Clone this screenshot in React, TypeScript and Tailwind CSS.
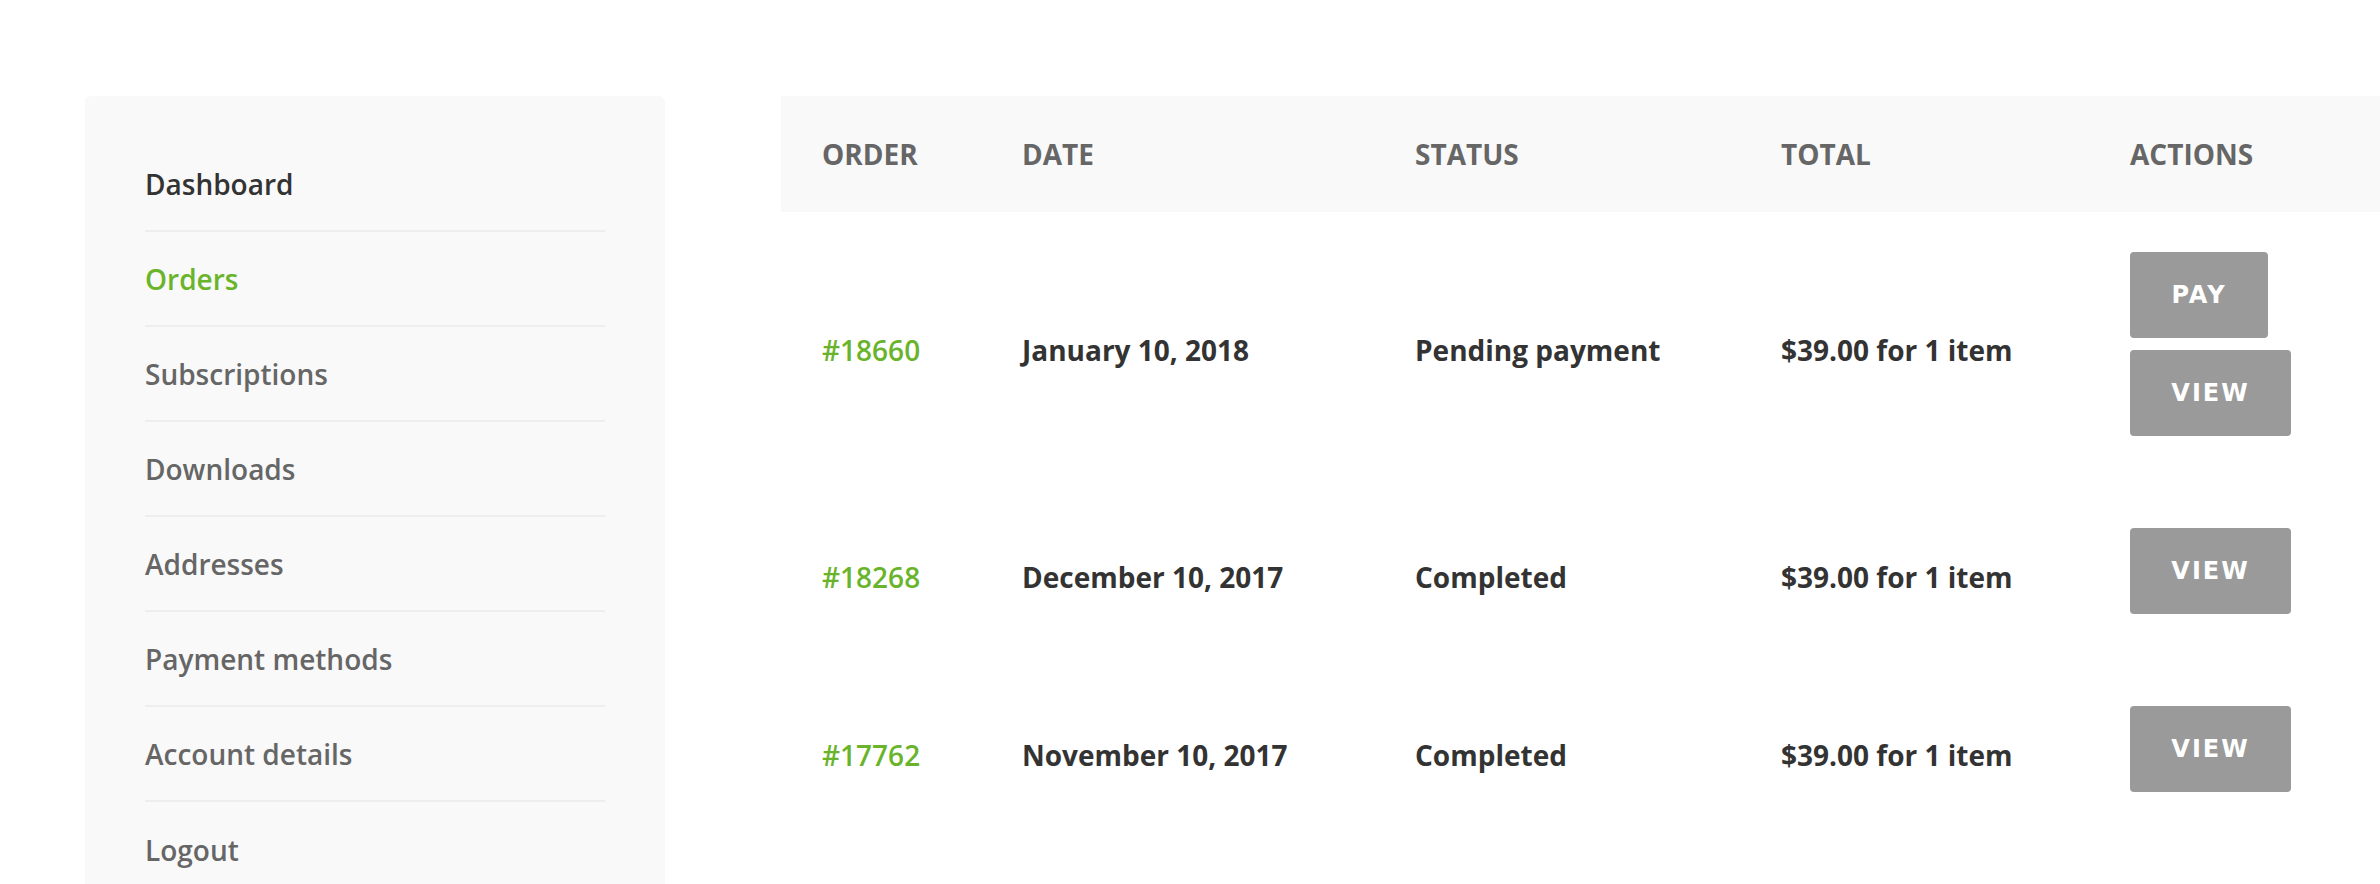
import React from "react";

const navItems = [
  { label: "Dashboard", tone: "text-[#333333]" },
  { label: "Orders", tone: "text-[#6ab42c]" },
  { label: "Subscriptions", tone: "text-[#666666]" },
  { label: "Downloads", tone: "text-[#666666]" },
  { label: "Addresses", tone: "text-[#666666]" },
  { label: "Payment methods", tone: "text-[#666666]" },
  { label: "Account details", tone: "text-[#666666]" },
  { label: "Logout", tone: "text-[#666666]" },
];

type Order = {
  id: string;
  date: string;
  status: string;
  total: string;
  actions: { label: string; width: string }[];
};

const orders: Order[] = [
  {
    id: "#18660",
    date: "January 10, 2018",
    status: "Pending payment",
    total: "$39.00 for 1 item",
    actions: [
      { label: "PAY", width: "w-[138px]" },
      { label: "VIEW", width: "w-[161px]" },
    ],
  },
  {
    id: "#18268",
    date: "December 10, 2017",
    status: "Completed",
    total: "$39.00 for 1 item",
    actions: [{ label: "VIEW", width: "w-[161px]" }],
  },
  {
    id: "#17762",
    date: "November 10, 2017",
    status: "Completed",
    total: "$39.00 for 1 item",
    actions: [{ label: "VIEW", width: "w-[161px]" }],
  },
];

const cols = "grid grid-cols-[200px_393px_366px_349px_1fr] pl-[41px]";

export default function App() {
  return (
    <div className="h-[884px] overflow-hidden bg-white font-['Open_Sans',sans-serif] flex pl-[85px] pt-[96px]">
      {/* Account navigation */}
      <aside className="w-[580px] shrink-0 bg-[#f9f9f9] rounded-md px-[60px] pt-[41px] pb-10 self-start">
        <ul>
          {navItems.map((item, i) => (
            <li
              key={item.label}
              className={`h-[95px] flex items-center text-[28px] font-semibold leading-none ${item.tone} ${
                i < navItems.length - 1 ? "border-b-2 border-[#eeeeee]" : ""
              }`}
            >
              {item.label}
            </li>
          ))}
        </ul>
      </aside>

      {/* Orders table */}
      <main className="flex-1 ml-[116px]">
        <div className={`${cols} h-[116px] items-center bg-[#f9f9f9] text-[28px] font-bold leading-none text-[#666666]`}>
          <div>ORDER</div>
          <div>DATE</div>
          <div>STATUS</div>
          <div>TOTAL</div>
          <div>ACTIONS</div>
        </div>

        {orders.map((o) => (
          <div key={o.id} className={`${cols} items-center py-10 text-[28px] font-bold leading-none text-[#333333]`}>
            <div className="font-semibold text-[#6ab42c]">{o.id}</div>
            <div>{o.date}</div>
            <div>{o.status}</div>
            <div>{o.total}</div>
            <div className="flex flex-col items-start">
              {o.actions.map((a) => (
                <button
                  key={a.label}
                  className={`${a.width} h-[86px] mb-[12px] rounded bg-[#9a9a9a] text-white text-[24px] font-bold tracking-[2px] font-['DejaVu_Sans',sans-serif] flex items-center justify-center`}
                >
                  {a.label}
                </button>
              ))}
            </div>
          </div>
        ))}
      </main>
    </div>
  );
}
